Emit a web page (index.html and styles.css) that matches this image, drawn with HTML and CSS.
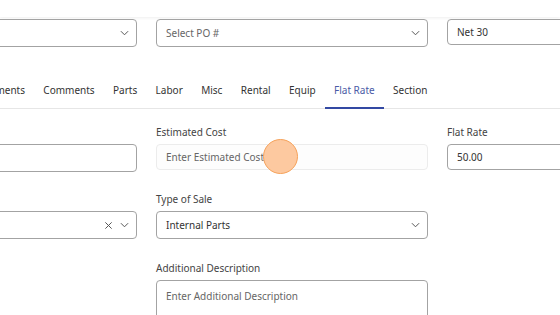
FILE: index.html
```html
<!DOCTYPE html>
<html lang="en">
<head>
    <meta charset="UTF-8">
    <meta name="viewport" content="width=device-width, initial-scale=1.0">
    <title>Work Order - Flat Rate</title>
    <link rel="stylesheet" href="styles.css">
</head>
<body>
    <div class="topbar"></div>

    <div class="page">
        <div class="row">
            <div class="field">
                <div class="select">
                    <span class="value"></span>
                    <svg class="chevron" viewBox="0 0 10 6"><path d="M1 1l4 4 4-4"/></svg>
                </div>
            </div>
            <div class="field">
                <div class="select">
                    <span class="placeholder">Select PO #</span>
                    <svg class="chevron" viewBox="0 0 10 6"><path d="M1 1l4 4 4-4"/></svg>
                </div>
            </div>
            <div class="field">
                <div class="input">
                    <span class="value">Net 30</span>
                </div>
            </div>
        </div>

        <div class="tabs">
            <a class="tab">Attachments</a>
            <a class="tab">Comments</a>
            <a class="tab">Parts</a>
            <a class="tab">Labor</a>
            <a class="tab">Misc</a>
            <a class="tab">Rental</a>
            <a class="tab">Equip</a>
            <a class="tab active">Flat Rate</a>
            <a class="tab">Section</a>
        </div>

        <div class="form">
            <div class="row first">
                <div class="field">
                    <label>&nbsp;</label>
                    <div class="input tall"></div>
                </div>
                <div class="field">
                    <label>Estimated Cost</label>
                    <div class="input disabled">
                        <span class="placeholder">Enter Estimated Cost</span>
                    </div>
                </div>
                <div class="field">
                    <label>Flat Rate</label>
                    <div class="input">
                        <span class="value">50.00</span>
                    </div>
                </div>
            </div>

            <div class="row">
                <div class="field">
                    <label>&nbsp;</label>
                    <div class="select">
                        <span class="value"></span>
                        <svg class="clear" viewBox="0 0 10 10"><path d="M1.5 1.5l7 7M8.5 1.5l-7 7"/></svg>
                        <svg class="chevron" viewBox="0 0 10 6"><path d="M1 1l4 4 4-4"/></svg>
                    </div>
                </div>
                <div class="field">
                    <label>Type of Sale</label>
                    <div class="select">
                        <span class="value">Internal Parts</span>
                        <svg class="chevron" viewBox="0 0 10 6"><path d="M1 1l4 4 4-4"/></svg>
                    </div>
                </div>
                <div class="field"></div>
            </div>

            <div class="row">
                <div class="field"></div>
                <div class="field">
                    <label>Additional Description</label>
                    <div class="textarea">
                        <span class="placeholder">Enter Additional Description</span>
                    </div>
                </div>
                <div class="field"></div>
            </div>
        </div>
    </div>

    <!-- click marker -->
    <div class="click-dot"></div>
</body>
</html>
```

FILE: styles.css
```css
* {
    margin: 0;
    padding: 0;
    box-sizing: border-box;
}

body {
    font-family: "Noto Sans", "Open Sans", sans-serif;
    font-size: 10px;
    color: #333;
    background: #fff;
    width: 560px;
    height: 315px;
    overflow: hidden;
    position: relative;
}

.topbar {
    height: 17px;
    background: #fff;
    box-shadow: 0 1px 3px rgba(0, 0, 0, 0.07);
}

.page {
    margin-left: -135px;
    padding-top: 2px;
}

.row {
    display: grid;
    grid-template-columns: repeat(3, 272px);
    column-gap: 19px;
}

.field label {
    display: block;
    height: 14px;
    line-height: 14px;
    margin-bottom: 5px;
    color: #444;
}

.input,
.select,
.textarea {
    height: 28px;
    border: 1px solid #a3a3a3;
    border-radius: 4px;
    background: #fff;
    display: flex;
    align-items: center;
    padding: 0 7px 0 9px;
}

.input {
    height: 26px;
}

.input.tall {
    height: 28px;
}

.input.disabled {
    border-color: #ececec;
    background: #fdfdfd;
}

.value {
    flex: 1;
    color: #333;
}

.placeholder {
    flex: 1;
    color: #666;
}

.chevron {
    width: 9px;
    height: 6px;
    margin-left: 7px;
    fill: none;
    stroke: #555;
    stroke-width: 1.1;
}

.clear {
    width: 9px;
    height: 9px;
    fill: none;
    stroke: #555;
    stroke-width: 1.1;
}

.textarea {
    height: 60px;
    align-items: flex-start;
    padding-top: 8px;
}

.tabs {
    display: flex;
    margin-top: 25px;
    margin-left: 91px;
    border-bottom: 1px solid #e6e6e6;
    width: 900px;
}

.tab {
    padding: 11px 9.2px 10px;
    line-height: 14px;
    border-bottom: 2px solid transparent;
    margin-bottom: -1px;
    color: #333;
    white-space: nowrap;
}

.tab.active {
    color: #4a5ba6;
    border-bottom-color: #3349a3;
}

.form {
    padding-top: 16px;
}

.form .row {
    margin-bottom: 22px;
}

.form .row.first {
    margin-bottom: 20px;
}

.click-dot {
    position: absolute;
    left: 263px;
    top: 139px;
    width: 35px;
    height: 35px;
    border-radius: 50%;
    background: #fdc9a0;
    border: 1.5px solid #f6a25a;
}
```
